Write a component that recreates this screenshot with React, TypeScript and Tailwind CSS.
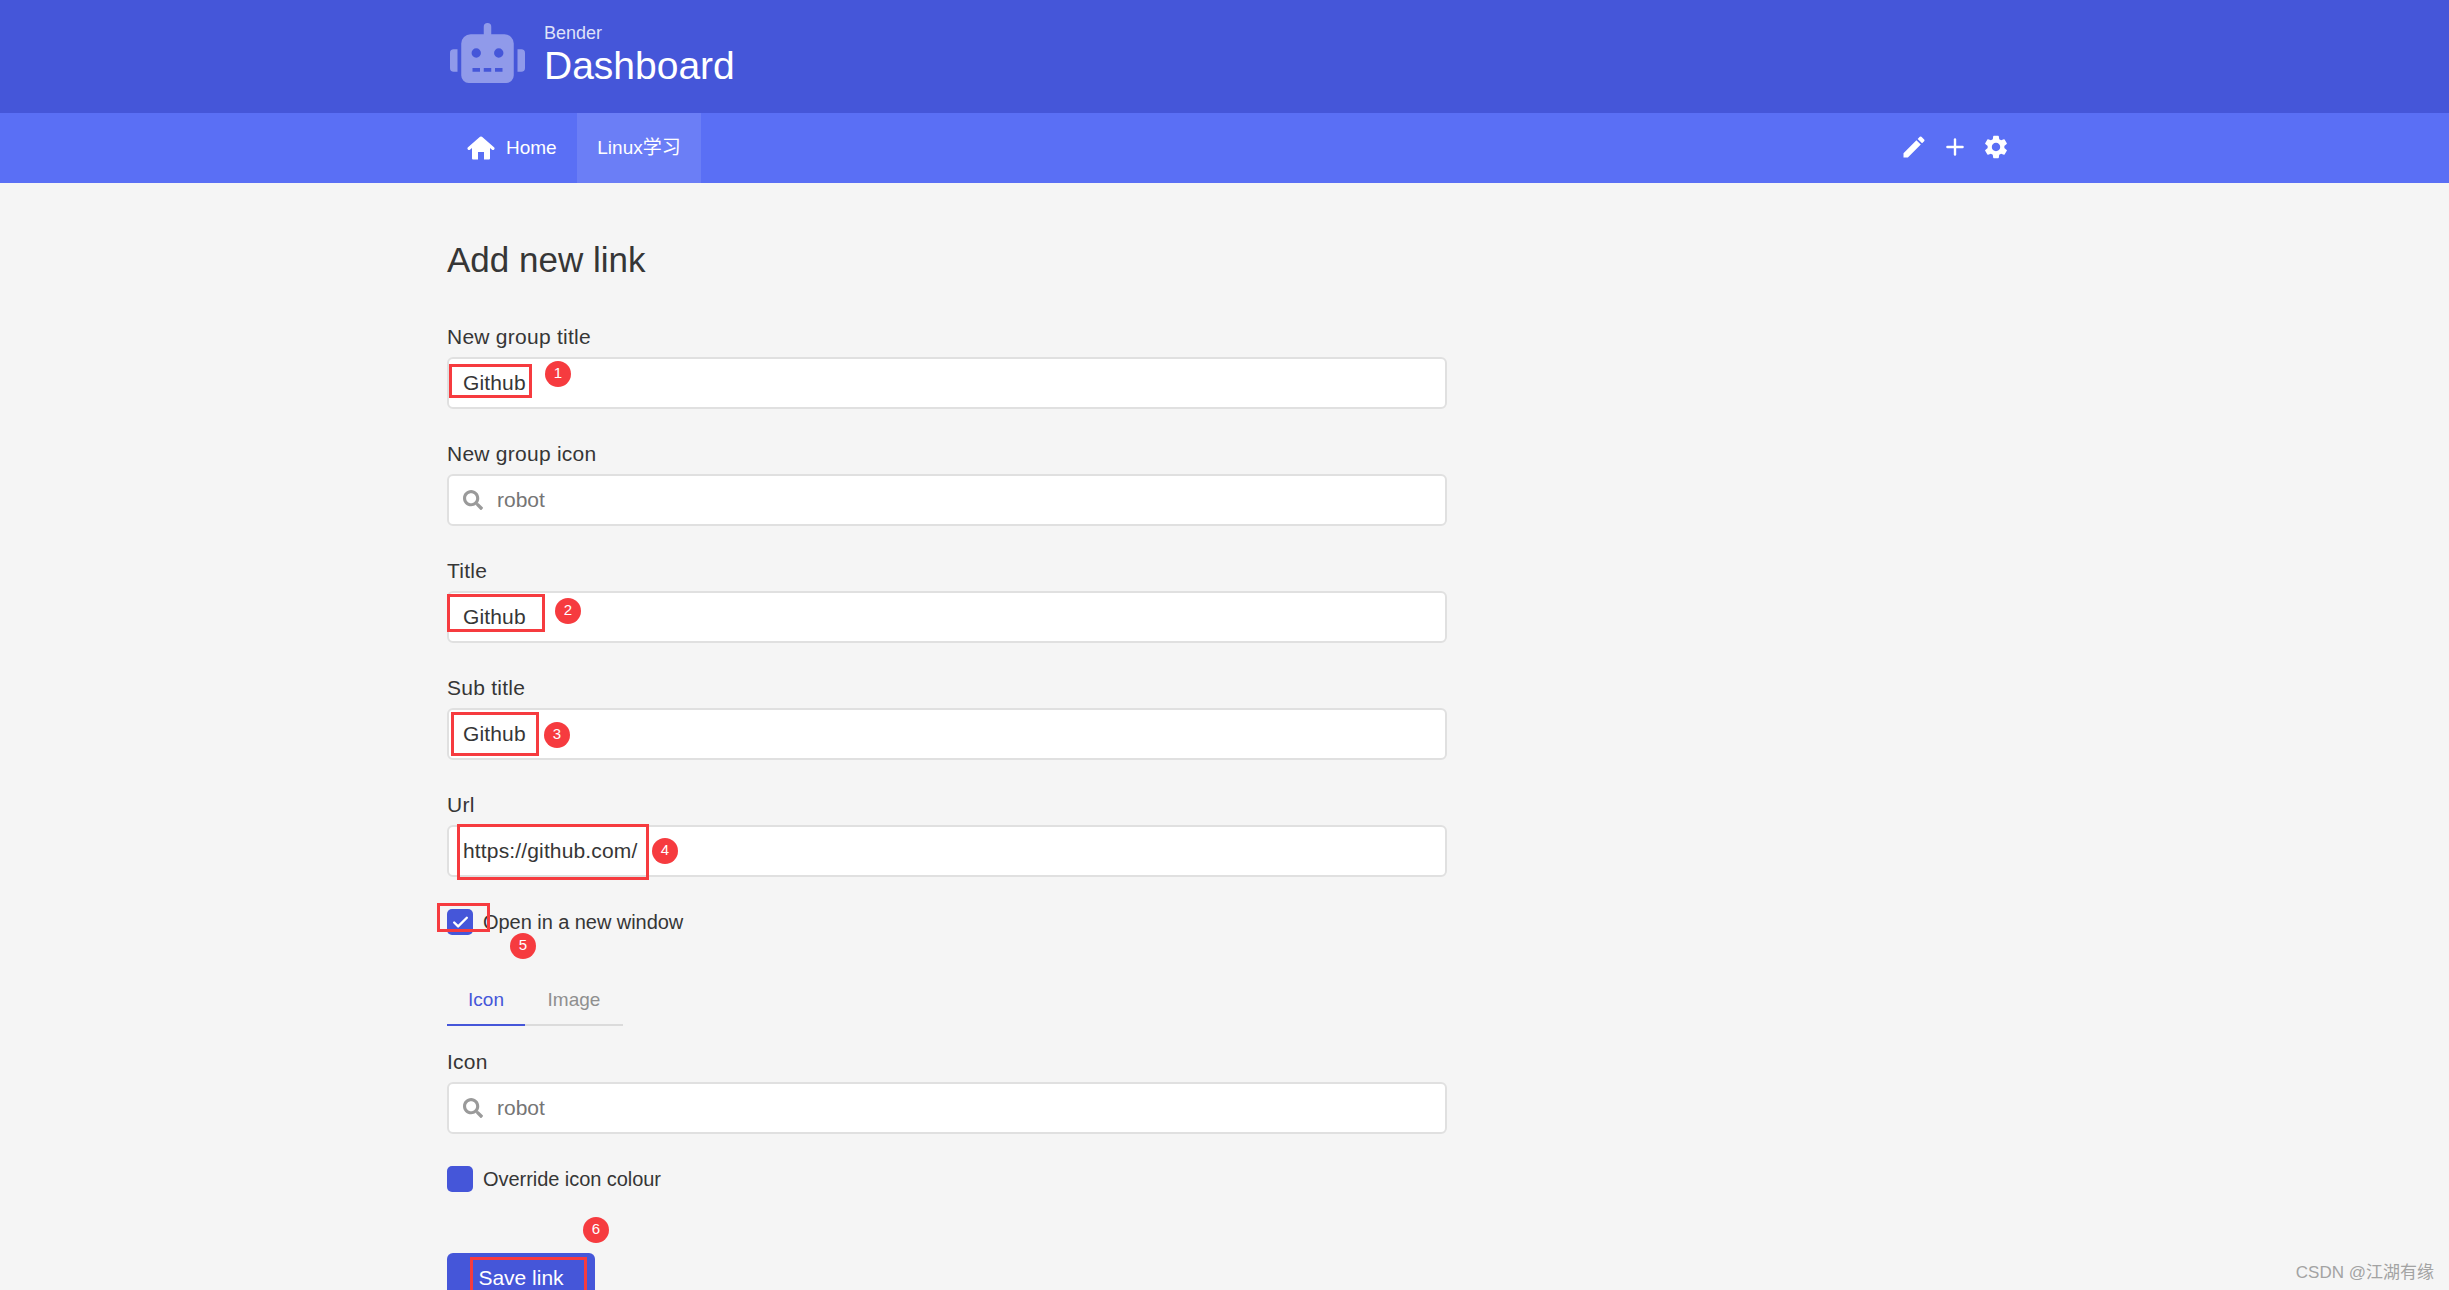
import React from 'react';
import { FaRobot, FaSearch } from 'react-icons/fa';
import { MdEdit, MdSettings } from 'react-icons/md';
import { Check, Plus } from 'lucide-react';

const Label: React.FC<{ children: React.ReactNode }> = ({ children }) => (
  <label className="block h-[33px] text-[21px] leading-[25px] tracking-[0.25px] text-[#363636]">{children}</label>
);

const TextField: React.FC<{ label: string; value: string }> = ({ label, value }) => (
  <div className="mb-[32px]">
    <Label>{label}</Label>
    <input
      readOnly
      value={value}
      className="block h-[52px] w-full rounded-[6px] border-2 border-[#e0e0e0] bg-white px-[14px] text-[21px] tracking-[0.15px] text-[#363636] outline-none"
    />
  </div>
);

const IconField: React.FC<{ label: string; value: string }> = ({ label, value }) => (
  <div className="mb-[32px]">
    <Label>{label}</Label>
    <div className="flex h-[52px] w-full items-center rounded-[6px] border-2 border-[#e0e0e0] bg-white pl-[14px] text-[21px] text-[#757575]">
      <FaSearch className="h-[20px] w-[20px] text-[#9a9a9a]" />
      <span className="ml-[14px]">{value}</span>
    </div>
  </div>
);

const CheckBox: React.FC<{ label: string; checked?: boolean }> = ({ label, checked }) => (
  <div className="flex h-[26px] items-center">
    <span className="flex h-[26px] w-[26px] items-center justify-center rounded-[5px] bg-[#4556d9]">
      {checked && <Check className="h-[19px] w-[19px] text-white" strokeWidth={3} />}
    </span>
    <span className="ml-[10px] text-[20px] tracking-[-0.05px] text-[#363636]">{label}</span>
  </div>
);

// 截图上的红色标注
const boxes = [
  'left-[449px] top-[364px] h-[34px] w-[83px]',
  'left-[447px] top-[594px] h-[38px] w-[98px]',
  'left-[451px] top-[712px] h-[44px] w-[88px]',
  'left-[457px] top-[824px] h-[56px] w-[192px]',
  'left-[437px] top-[903px] h-[29px] w-[53px]',
  'left-[470px] top-[1257px] h-[40px] w-[117px]',
];

const badges = [
  { n: 1, pos: 'left-[545px] top-[361px]' },
  { n: 2, pos: 'left-[555px] top-[598px]' },
  { n: 3, pos: 'left-[544px] top-[722px]' },
  { n: 4, pos: 'left-[652px] top-[838px]' },
  { n: 5, pos: 'left-[510px] top-[933px]' },
  { n: 6, pos: 'left-[583px] top-[1217px]' },
];

export default function App() {
  return (
    <div className="relative h-[1290px] w-full overflow-hidden bg-[#f5f5f5] font-['Liberation_Sans','Noto_Sans_CJK_SC',sans-serif]">
      {/* ヘッダー */}
      <header className="h-[113px] bg-[#4556d9]">
        <div className="mx-auto flex h-full w-[1555px] items-center">
          <FaRobot className="ml-[3px] mt-[-7px] h-[60px] w-[75px] text-[#909aea]" />
          <div className="ml-[19px]">
            <p className="mt-[-2px] text-[18px] leading-[20px] text-[#dfe2f8]">Bender</p>
            <h1 className="mt-[1px] text-[39px] leading-[44px] text-white">Dashboard</h1>
          </div>
        </div>
      </header>

      <nav className="h-[70px] bg-[#5a6ff5]">
        <div className="mx-auto flex h-full w-[1555px] items-stretch justify-between">
          <div className="flex items-stretch text-[19px] text-white">
            <a className="flex w-[130px] items-center pl-[20px]">
              <svg viewBox="0 0 28 24" className="h-[24px] w-[28px]" fill="currentColor">
                <path d="M5 11 14 3l9 8v11.5a1 1 0 0 1-1 1h-5V16h-6v7.5H6a1 1 0 0 1-1-1Z" />
                <path d="M2 12.5 14 2l12 10.5" fill="none" stroke="currentColor" strokeWidth="3" strokeLinecap="round" strokeLinejoin="round" />
              </svg>
              <span className="ml-[11px]">Home</span>
            </a>
            <a className="flex w-[124px] items-center justify-center bg-[#6b7ef6]">Linux学习</a>
          </div>
          <div className="mb-[3px] mr-[-8px] flex items-center gap-[14px] text-white">
            <MdEdit className="h-[28px] w-[28px]" />
            <Plus className="h-[26px] w-[26px]" strokeWidth={2.2} />
            <MdSettings className="h-[28px] w-[28px]" />
          </div>
        </div>
      </nav>

      <main className="mx-auto w-[1555px]">
        <div className="w-[1000px] pt-[49px]">
          <h2 className="mb-[36px] h-[56px] text-[35px] leading-[56px] text-[#363636]">Add new link</h2>
          <div>
            <TextField label="New group title" value="Github" />
            <IconField label="New group icon" value="robot" />
            <TextField label="Title" value="Github" />
            <TextField label="Sub title" value="Github" />
            <TextField label="Url" value="https://github.com/" />
          </div>

          <CheckBox label="Open in a new window" checked />

          <div className="mt-[47px] flex h-[44px] w-[176px] border-b-2 border-[#dbdbdb] text-[19px] leading-[22px]">
            <span className="mb-[-2px] flex w-[78px] justify-center border-b-2 border-[#4556d9] pt-[7px] text-[#4556d9]">Icon</span>
            <span className="flex w-[98px] justify-center pt-[7px] text-[#8f8f8f]">Image</span>
          </div>

          <div className="mt-[23px]">
            <IconField label="Icon" value="robot" />
          </div>

          <CheckBox label="Override icon colour" />

          <button className="mt-[61px] block h-[52px] w-[148px] rounded-[6px] bg-[#4556d9] pb-[2px] text-[21px] text-white">Save link</button>
        </div>
      </main>

      {boxes.map((b) => (
        <div key={b} className={`absolute border-[3px] border-[#f63b3f] ${b}`} />
      ))}
      {badges.map((b) => (
        <div key={b.n} className={`absolute flex h-[26px] w-[26px] items-center justify-center rounded-full bg-[#f63b3f] pb-[2px] text-[15px] text-white ${b.pos}`}>
          {b.n}
        </div>
      ))}

      <div className="absolute bottom-[5px] right-[15px] text-[17px] text-[#a3a3a3]">CSDN @江湖有缘</div>
    </div>
  );
}
